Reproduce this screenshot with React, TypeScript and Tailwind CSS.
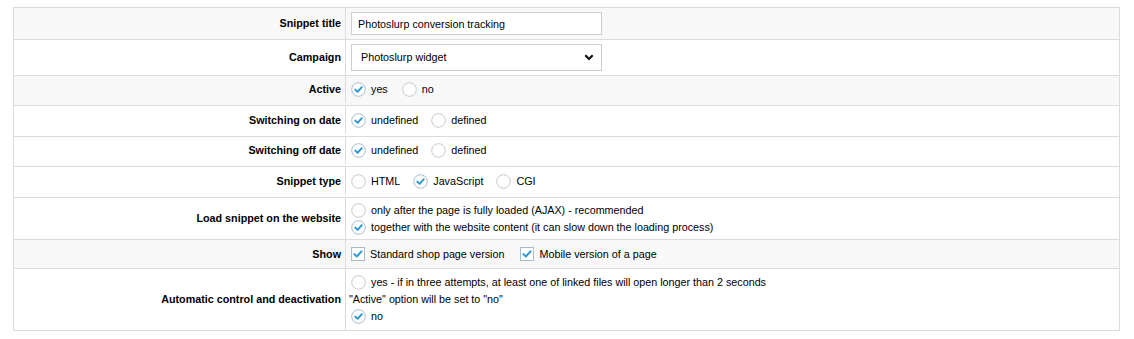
import type { ReactNode } from "react";

const Radio = ({ checked }: { checked?: boolean }) => (
  <svg width="15" height="15" viewBox="0 0 15 15" className="shrink-0">
    <circle
      cx="7.5"
      cy="7.5"
      r="6.8"
      fill="#fff"
      stroke={checked ? "#a9bccc" : "#c8c8c8"}
      strokeWidth="1"
    />
    {checked && (
      <path
        d="M4.3 7.6 L6.6 9.8 L10.8 5.2"
        fill="none"
        stroke="#2e98d4"
        strokeWidth="2"
        strokeLinecap="round"
        strokeLinejoin="round"
      />
    )}
  </svg>
);

const Checkbox = ({ checked }: { checked?: boolean }) => (
  <svg width="14" height="14" viewBox="0 0 14 14" className="shrink-0">
    <rect x="0.5" y="0.5" width="13" height="13" fill="#fff" stroke="#a9bccc" />
    {checked && (
      <path
        d="M3.3 7.1 L5.8 9.5 L10.6 4.4"
        fill="none"
        stroke="#2e98d4"
        strokeWidth="2"
        strokeLinecap="round"
        strokeLinejoin="round"
      />
    )}
  </svg>
);

const Option = ({
  label,
  checked,
  box,
}: {
  label: string;
  checked?: boolean;
  box?: boolean;
}) => (
  <label className="flex h-[15px] items-center gap-[5px]">
    {box ? <Checkbox checked={checked} /> : <Radio checked={checked} />}
    <span>{label}</span>
  </label>
);

const Row = ({
  label,
  h,
  gray,
  lift,
  children,
}: {
  label: string;
  h: string;
  gray?: boolean;
  lift?: boolean;
  children: ReactNode;
}) => (
  <div
    className={`flex border-b border-[#dcdcdc] ${h} ${gray ? "bg-[#f8f8f8]" : "bg-white"} ${lift ? "pb-[2px]" : ""}`}
  >
    <div className="flex w-[332px] shrink-0 items-center justify-end border-r border-[#dcdcdc] pr-[4px] font-bold">
      {label}
    </div>
    <div className="flex flex-1 items-center pl-[5px]">{children}</div>
  </div>
);

export default function App() {
  return (
    <div className="min-h-[339px] bg-white pt-[7px] pl-[13px] text-[10.75px] text-black [font-family:'Liberation_Sans',Arial,sans-serif]">
      <div className="w-[1107px] border-x border-t border-[#dcdcdc]">
        <Row label="Snippet title" h="h-[32px]" gray>
          <input
            className="h-[23px] w-[251px] border border-[#cfcfcf] bg-white px-[6px] text-[10.75px] text-black outline-none"
            defaultValue="Photoslurp conversion tracking"
          />
        </Row>
        <Row label="Campaign" h="h-[36px]">
          <div className="flex h-[27px] w-[251px] items-center justify-between border border-[#cfcfcf] bg-white pr-[7px] pl-[9px]">
            <span>Photoslurp widget</span>
            <svg width="10" height="7" viewBox="0 0 10 7">
              <path
                d="M1.3 1.3 L5 5 L8.7 1.3"
                fill="none"
                stroke="#111"
                strokeWidth="2.2"
              />
            </svg>
          </div>
        </Row>
        <Row label="Active" h="h-[30px]" gray lift>
          <div className="flex items-center gap-[14px]">
            <Option label="yes" checked />
            <Option label="no" />
          </div>
        </Row>
        <Row label="Switching on date" h="h-[31px]" lift>
          <div className="flex items-center gap-[13px]">
            <Option label="undefined" checked />
            <Option label="defined" />
          </div>
        </Row>
        <Row label="Switching off date" h="h-[30px]" lift>
          <div className="flex items-center gap-[13px]">
            <Option label="undefined" checked />
            <Option label="defined" />
          </div>
        </Row>
        <Row label="Snippet type" h="h-[31px]" lift>
          <div className="flex items-center gap-[13px]">
            <Option label="HTML" />
            <Option label="JavaScript" checked />
            <Option label="CGI" />
          </div>
        </Row>
        <Row label="Load snippet on the website" h="h-[42px]">
          <div className="flex flex-col gap-[2px]">
            <Option label="only after the page is fully loaded (AJAX) - recommended" />
            <Option label="together with the website content (it can slow down the loading process)" checked />
          </div>
        </Row>
        <Row label="Show" h="h-[29px]" gray>
          <div className="flex items-center gap-[16px]">
            <Option label="Standard shop page version" checked box />
            <Option label="Mobile version of a page" checked box />
          </div>
        </Row>
        <Row label="Automatic control and deactivation" h="h-[62px]">
          <div className="flex flex-col gap-[2px]">
            <Option label="yes - if in three attempts, at least one of linked files will open longer than 2 seconds" />
            <span className="-ml-[2px] h-[15px] leading-[15px]">"Active" option will be set to "no"</span>
            <Option label="no" checked />
          </div>
        </Row>
      </div>
    </div>
  );
}
